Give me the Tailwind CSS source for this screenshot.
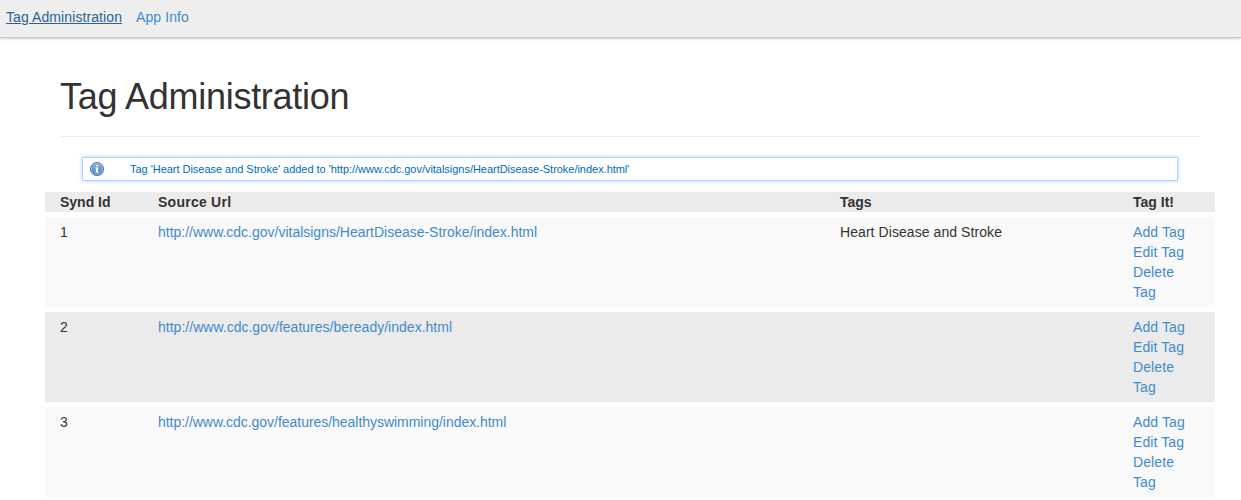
<!DOCTYPE html>
<html lang="en">
<head>
<meta charset="utf-8">
<title>Tag Administration</title>
<script src="https://cdn.jsdelivr.net/npm/@tailwindcss/browser@4"></script>
</head>
<body class="h-[500px] overflow-hidden bg-white font-['Liberation_Sans',Arial,sans-serif] text-sm leading-5 text-[#333]">
<nav class="flex h-[38px] gap-[14px] border-b border-[#c8c8c8] bg-[#eee] pt-[7px] pl-1.5 tracking-[0.09px] text-[#428bca] shadow-[0_0_3px_#aaaaaa]">
  <a href="#" class="h-5 text-[#2a6496] underline">Tag Administration</a>
  <a href="#" class="h-5">App Info</a>
</nav>
<main class="ml-[45px] w-[1170px]">
  <h1 class="mr-[15px] ml-[15px] h-[99px] border-b border-[#eee] pt-[39px] text-[36px] leading-10 tracking-[-0.27px]">Tag Administration</h1>
  <div role="status" class="mx-[37px] mt-5 flex h-6 items-center border border-[#b2d1ff] bg-white pl-1.5 text-[11px] text-[#006dba] shadow-[0_0_4px_#b2d1ff]">
    <svg class="mr-[25px] h-4 w-4" viewBox="0 0 16 16">
      <defs><linearGradient id="g" x1="0" y1="0" x2="0" y2="1"><stop offset="0" stop-color="#8fb6dc"/><stop offset="1" stop-color="#4f82ba"/></linearGradient></defs>
      <circle cx="8" cy="8" r="6.6" fill="url(#g)" stroke="#5b80ae"/>
      <circle cx="8" cy="8" r="5.6" fill="none" stroke="#9dbde0" stroke-width=".6"/>
      <path d="M7 4h2v1.6H7zM6.4 6.6H9v4.2h.7v1H6.4v-1h.7V7.6h-.7z" fill="#fff"/>
    </svg>
    <span class="tracking-[-0.03px]">Tag 'Heart Disease and Stroke' added to 'http://www.cdc.gov/vitalsigns/HeartDisease-Stroke/index.html'</span>
  </div>
  <div class="mt-[11px] grid grid-cols-[98px_682px_293px_97px] bg-[#ebebeb] font-bold *:px-[15px]">
    <div>Synd Id</div><div class="tracking-[0.25px]">Source Url</div><div>Tags</div><div>Tag It!</div>
  </div>
  <div class="mt-[5px] grid grid-cols-[98px_682px_293px_97px] bg-[#f9f9f9] py-[5px] *:px-[15px]">
    <div>1</div>
    <div><a href="#" class="tracking-[-0.01px] text-[#428bca]">http://www.cdc.gov/vitalsigns/HeartDisease-Stroke/index.html</a></div>
    <div class="tracking-[0.07px]">Heart Disease and Stroke</div>
    <div class="tracking-[0.1px] text-[#428bca]"><a href="#">Add Tag</a><br><a href="#">Edit Tag</a><br><a href="#">Delete<br>Tag</a></div>
  </div>
  <div class="mt-[5px] grid grid-cols-[98px_682px_293px_97px] bg-[#ebebeb] py-[5px] *:px-[15px]">
    <div>2</div>
    <div><a href="#" class="tracking-[0.015px] text-[#428bca]">http://www.cdc.gov/features/beready/index.html</a></div>
    <div></div>
    <div class="tracking-[0.1px] text-[#428bca]"><a href="#">Add Tag</a><br><a href="#">Edit Tag</a><br><a href="#">Delete<br>Tag</a></div>
  </div>
  <div class="mt-[5px] grid grid-cols-[98px_682px_293px_97px] bg-[#f9f9f9] py-[5px] *:px-[15px]">
    <div>3</div>
    <div><a href="#" class="tracking-[-0.035px] text-[#428bca]">http://www.cdc.gov/features/healthyswimming/index.html</a></div>
    <div></div>
    <div class="tracking-[0.1px] text-[#428bca]"><a href="#">Add Tag</a><br><a href="#">Edit Tag</a><br><a href="#">Delete<br>Tag</a></div>
  </div>
</main>
</body>
</html>
